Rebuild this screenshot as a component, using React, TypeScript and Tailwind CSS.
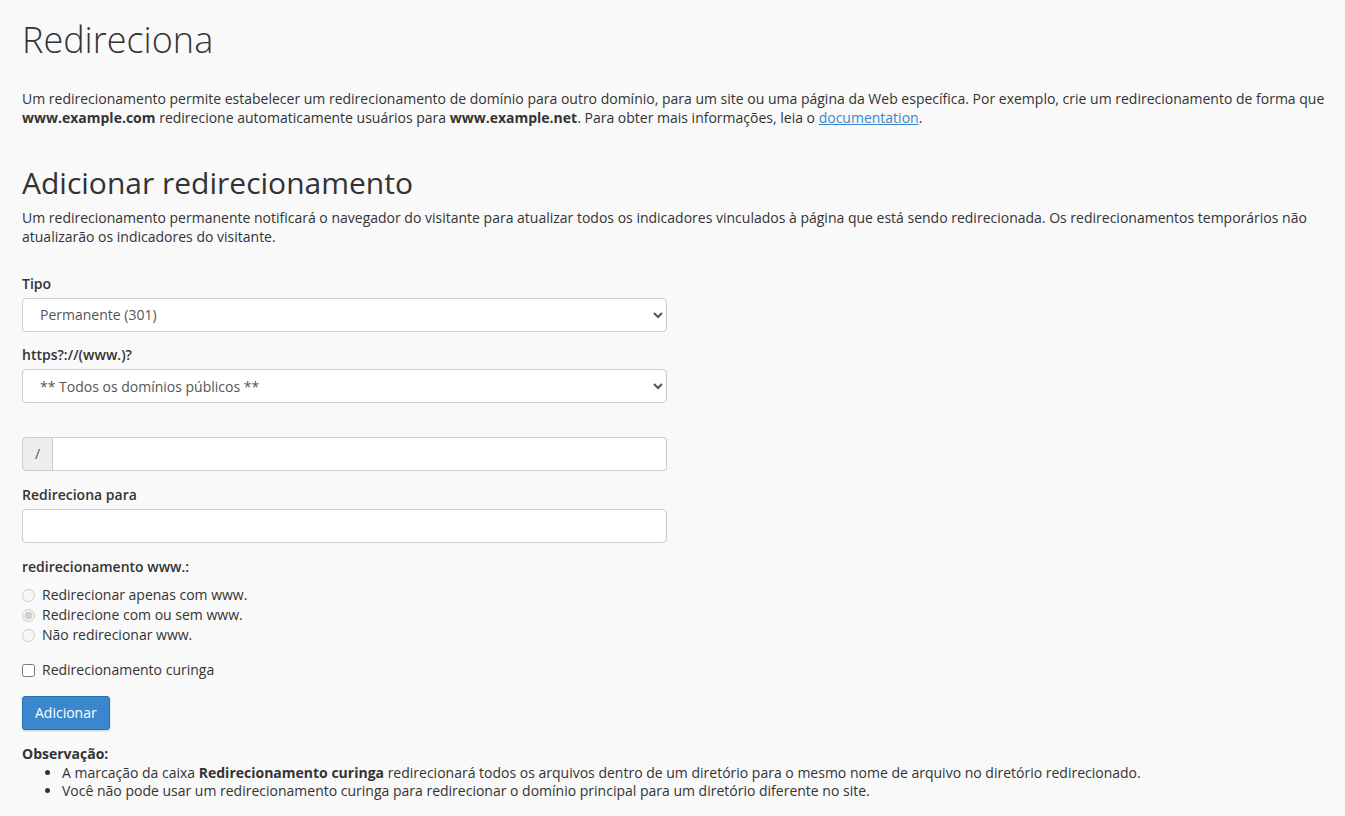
import { useState } from 'react'

export default function App() {
  const [wild, setWild] = useState(false)

  return (
    <div className="min-h-[816px] bg-[#f9f9f9] pb-4 pl-[22px] pr-[14px] pt-[18px] font-['Open_Sans',sans-serif] text-[14px] leading-[18.5px] text-[#333]">
      <h1 className="text-[36px] font-light leading-[44px] text-[#333]">Redireciona</h1>

      <p className="mt-[28px]">
        Um redirecionamento permite estabelecer um redirecionamento de domínio para outro domínio, para um site ou uma página da Web específica. Por
        exemplo, crie um redirecionamento de forma que <strong className="font-bold">www.example.com</strong> redirecione automaticamente usuários para{' '}
        <strong className="font-bold">www.example.net</strong>. Para obter mais informações, leia o{' '}
        <a href="#" className="text-[#3a87cf] underline">
          documentation
        </a>
        .
      </p>

      <h2 className="mt-[38px] text-[30px] font-normal leading-[36px]">Adicionar redirecionamento</h2>
      <p className="mt-[8px] pr-[8px]">
        Um redirecionamento permanente notificará o navegador do visitante para atualizar todos os indicadores vinculados à página que está sendo
        redirecionada. Os redirecionamentos temporários não atualizarão os indicadores do visitante.
      </p>

      <form className="mt-[29px] w-[645px]" onSubmit={(e) => e.preventDefault()}>
        <label className="block font-semibold">Tipo</label>
        <select className="mt-[4px] block h-[34px] w-full rounded border border-[#ccc] bg-white px-[13px] text-[14px] text-[#555]">
          <option>Permanente (301)</option>
          <option>Temporário (302)</option>
        </select>

        <label className="mt-[14px] block font-semibold">https?://(www.)?</label>
        <select className="mt-[5px] block h-[34px] w-full rounded border border-[#ccc] bg-white px-[13px] text-[14px] text-[#555]">
          <option>** Todos os domínios públicos **</option>
        </select>

        <div className="mt-[34px] flex h-[34px] w-full">
          <span className="flex w-[31px] items-center justify-center rounded-l border border-[#ccc] bg-[#eee] text-[#555]">/</span>
          <input className="flex-1 rounded-r border border-l-0 border-[#ccc] bg-white px-3 text-[14px] text-[#555]" />
        </div>

        <label className="mt-[15px] block font-semibold">Redireciona para</label>
        <input className="mt-[4px] block h-[34px] w-full rounded border border-[#ccc] bg-white px-3 text-[14px] text-[#555]" />

        <div className="mt-[15px] font-semibold">redirecionamento www.:</div>
        <div className="mt-[9px] flex flex-col">
          {['Redirecionar apenas com www.', 'Redirecione com ou sem www.', 'Não redirecionar www.'].map((t, i) => (
            <label key={t} className="flex h-[20px] items-center gap-[7px] text-[#333]">
              <input type="radio" name="www" disabled defaultChecked={i === 1} className="m-0 h-[13px] w-[13px]" />
              <span>{t}</span>
            </label>
          ))}
        </div>

        <label className="mt-[15px] flex h-[20px] items-center gap-[7px]">
          <input type="checkbox" checked={wild} onChange={(e) => setWild(e.target.checked)} className="m-0 h-[13px] w-[13px]" />
          <span>Redirecionamento curinga</span>
        </label>

        <button
          type="submit"
          className="mt-[16px] h-[34px] rounded-[3px] border border-[#2e6fae] bg-[#3a87cf] px-[12px] text-[14px] text-white shadow-[0_1px_2px_rgba(0,0,0,0.2)]"
        >
          Adicionar
        </button>
      </form>

      <div className="mt-[15px]">
        <strong className="font-bold">Observação:</strong>
        <ul className="list-disc pl-[40px]">
          <li>
            A marcação da caixa <strong className="font-bold">Redirecionamento curinga</strong> redirecionará todos os arquivos dentro de um diretório para o
            mesmo nome de arquivo no diretório redirecionado.
          </li>
          <li>Você não pode usar um redirecionamento curinga para redirecionar o domínio principal para um diretório diferente no site.</li>
        </ul>
      </div>
    </div>
  )
}
